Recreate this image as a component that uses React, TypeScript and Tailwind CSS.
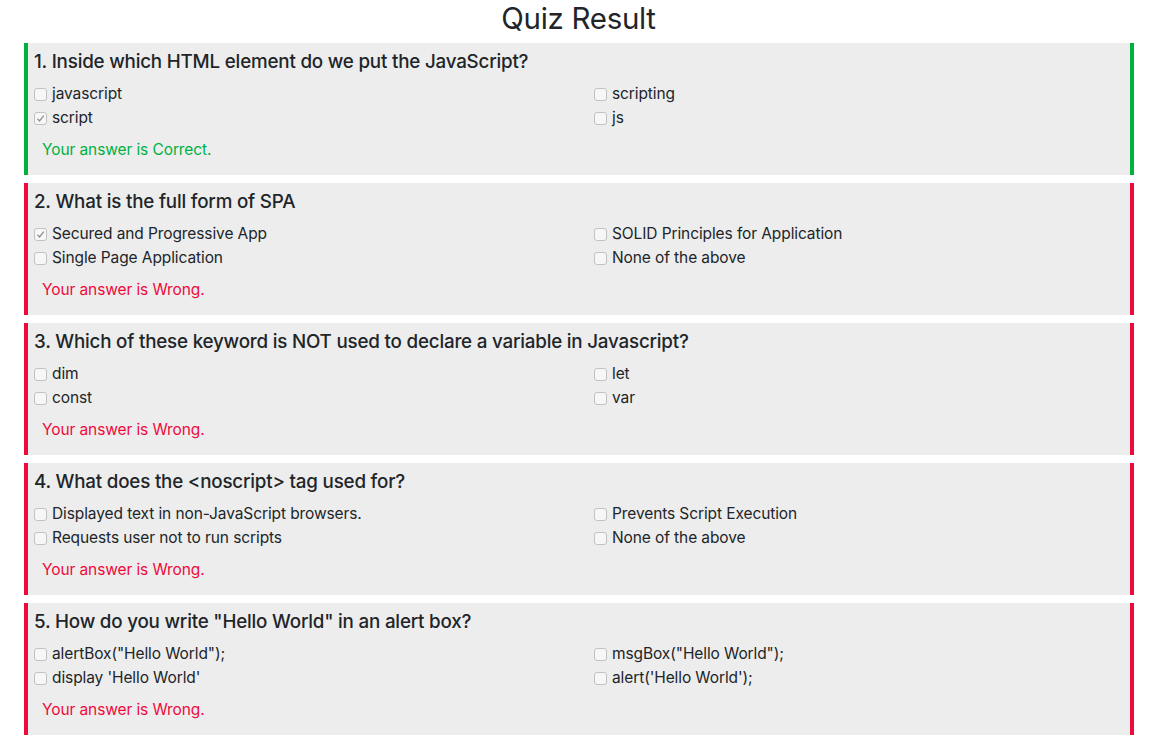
import React from "react";

type Q = { q: string; opts: string[]; checked: number; correct: boolean };

const data: Q[] = [
  { q: "1. Inside which HTML element do we put the JavaScript?", opts: ["javascript", "scripting", "script", "js"], checked: 2, correct: true },
  { q: "2. What is the full form of SPA", opts: ["Secured and Progressive App", "SOLID Principles for Application", "Single Page Application", "None of the above"], checked: 0, correct: false },
  { q: "3. Which of these keyword is NOT used to declare a variable in Javascript?", opts: ["dim", "let", "const", "var"], checked: -1, correct: false },
  { q: "4. What does the <noscript> tag used for?", opts: ["Displayed text in non-JavaScript browsers.", "Prevents Script Execution", "Requests user not to run scripts", "None of the above"], checked: -1, correct: false },
  { q: "5. How do you write \"Hello World\" in an alert box?", opts: ["alertBox(\"Hello World\");", "msgBox(\"Hello World\");", "display 'Hello World'", "alert('Hello World');"], checked: -1, correct: false },
];

function Box({ checked }: { checked: boolean }) {
  return (
    <span className="w-[13px] h-[13px] rounded-[3px] border border-[#c2c2c2] bg-[#f7f7f7] flex items-center justify-center shrink-0">
      {checked && (
        <svg width="9" height="9" viewBox="0 0 9 9">
          <path d="M1.5 4.8 L3.5 7 L7.8 1.6" fill="none" stroke="#8f8f8f" strokeWidth="1.3" />
        </svg>
      )}
    </span>
  );
}

export default function App() {
  return (
    <div className="bg-white text-[#212529] pb-4" style={{ fontFamily: "Inter, 'Liberation Sans', sans-serif" }}>
      <h1 className="text-center text-[29.5px] leading-[36px] h-[43px] font-normal tracking-[-0.3px] pl-[4px]">Quiz Result</h1>
      <div className="flex flex-col gap-2 mx-[24px] w-[1110px]">
        {data.map((d, i) => (
          <div
            key={i}
            className={`bg-[#ededed] border-l-4 border-r-4 pl-[6px] pt-[5px] pb-[13px] ${d.correct ? "border-[#00b140]" : "border-[#ee0a3b]"}`}
          >
            <div className="text-[18.8px] leading-[28px] font-medium tracking-[-0.2px]">{d.q}</div>
            <div className="grid grid-cols-[560px_1fr] mt-[6px]">
              {d.opts.map((o, j) => (
                <label key={j} className="flex items-center gap-[5px] h-[24px] text-[15.5px] tracking-[-0.1px]">
                  <Box checked={d.checked === j} />
                  <span>{o}</span>
                </label>
              ))}
            </div>
            <div className={`mt-[8px] pl-[8px] text-[15.5px] leading-[24px] tracking-[-0.1px] ${d.correct ? "text-[#00b140]" : "text-[#ee0a3b]"}`}>
              Your answer is {d.correct ? "Correct." : "Wrong."}
            </div>
          </div>
        ))}
      </div>
    </div>
  );
}
